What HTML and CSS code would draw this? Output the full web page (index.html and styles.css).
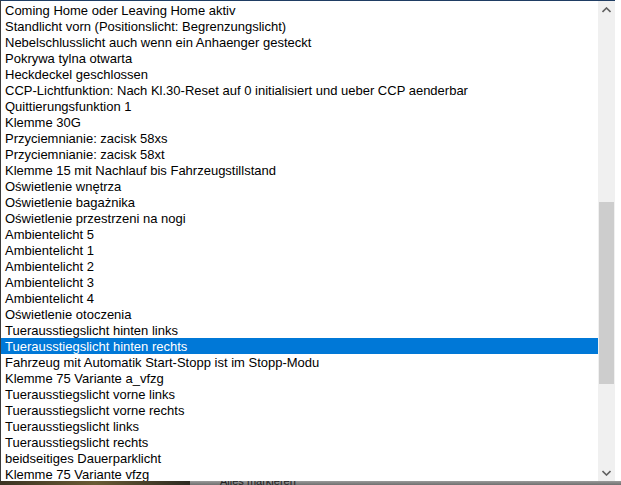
FILE: index.html
```html
<!DOCTYPE html>
<html lang="de">
<head>
    <meta charset="UTF-8">
    <title>Liste</title>
    <link rel="stylesheet" href="styles.css">
</head>
<body>
    <div class="screen">
        <div class="listbox">
            <ul class="items">
                <li>Coming Home oder Leaving Home aktiv</li>
                <li>Standlicht vorn (Positionslicht: Begrenzungslicht)</li>
                <li>Nebelschlusslicht auch wenn ein Anhaenger gesteckt</li>
                <li>Pokrywa tylna otwarta</li>
                <li>Heckdeckel geschlossen</li>
                <li>CCP-Lichtfunktion: Nach Kl.30-Reset auf 0 initialisiert und ueber CCP aenderbar</li>
                <li>Quittierungsfunktion 1</li>
                <li>Klemme 30G</li>
                <li>Przyciemnianie: zacisk 58xs</li>
                <li>Przyciemnianie: zacisk 58xt</li>
                <li>Klemme 15 mit Nachlauf bis Fahrzeugstillstand</li>
                <li>Oświetlenie wnętrza</li>
                <li>Oświetlenie bagażnika</li>
                <li>Oświetlenie przestrzeni na nogi</li>
                <li>Ambientelicht 5</li>
                <li>Ambientelicht 1</li>
                <li>Ambientelicht 2</li>
                <li>Ambientelicht 3</li>
                <li>Ambientelicht 4</li>
                <li>Oświetlenie otoczenia</li>
                <li>Tuerausstiegslicht hinten links</li>
                <li class="selected">Tuerausstiegslicht hinten rechts</li>
                <li>Fahrzeug mit Automatik Start-Stopp ist im Stopp-Modu</li>
                <li>Klemme 75 Variante a_vfzg</li>
                <li>Tuerausstiegslicht vorne links</li>
                <li>Tuerausstiegslicht vorne rechts</li>
                <li>Tuerausstiegslicht links</li>
                <li>Tuerausstiegslicht rechts</li>
                <li>beidseitiges Dauerparklicht</li>
                <li>Klemme 75 Variante vfzg</li>
            </ul>
            <div class="scrollbar">
                <div class="arrow">
                    <svg width="9" height="6" viewBox="0 0 9 6"><path d="M0.5 5 L4.5 1 L8.5 5" fill="none" stroke="#606060" stroke-width="1.6"/></svg>
                </div>
                <div class="track">
                    <div class="thumb"></div>
                </div>
                <div class="arrow">
                    <svg width="9" height="6" viewBox="0 0 9 6"><path d="M0.5 1 L4.5 5 L8.5 1" fill="none" stroke="#606060" stroke-width="1.6"/></svg>
                </div>
            </div>
        </div>
        <div class="under">
            <div class="desk"></div>
            <div class="bar"><span>Alles markieren</span></div>
        </div>
    </div>
</body>
</html>
```

FILE: styles.css
```css
body {
    margin: 0;
    background-color: #ffffff;
    font-family: "Liberation Sans", Arial, sans-serif;
}
.screen {
    width: 621px;
    height: 485px;
    overflow: hidden;
}
.listbox {
    display: flex;
    width: 614px;
    height: 480px;
    border-top: 1px solid #1f3d63;
    border-left: 1px solid #3a3a3a;
    background-color: #ffffff;
    overflow: hidden;
}
.items {
    flex: 1;
    list-style: none;
    margin: 0;
    padding: 1px 0 0 0;
    overflow: hidden;
}
.items li {
    height: 16px;
    line-height: 17px;
    padding-left: 4px;
    font-size: 13px;
    color: #000000;
    white-space: nowrap;
    overflow: hidden;
}
.items li.selected {
    background-color: #0078d7;
    color: #ffffff;
}
.scrollbar {
    width: 17px;
    display: flex;
    flex-direction: column;
    background-color: #f0f0f0;
}
.arrow {
    height: 17px;
    display: flex;
    align-items: center;
    justify-content: center;
}
.track {
    flex: 1;
    padding-top: 184px;
}
.thumb {
    height: 182px;
    margin: 0 1px;
    background-color: #cdcdcd;
}
.under {
    display: flex;
    height: 4px;
}
.desk {
    width: 190px;
    background: linear-gradient(to right, #3b3323, #6a5a34, #2d2a22);
}
.bar {
    flex: 1;
    background: linear-gradient(to bottom, #9a9a9a, #6f6f6f);
    font-size: 11px;
    color: #222222;
    overflow: hidden;
}
.bar span {
    display: block;
    margin: -6px 0 0 30px;
}
```
